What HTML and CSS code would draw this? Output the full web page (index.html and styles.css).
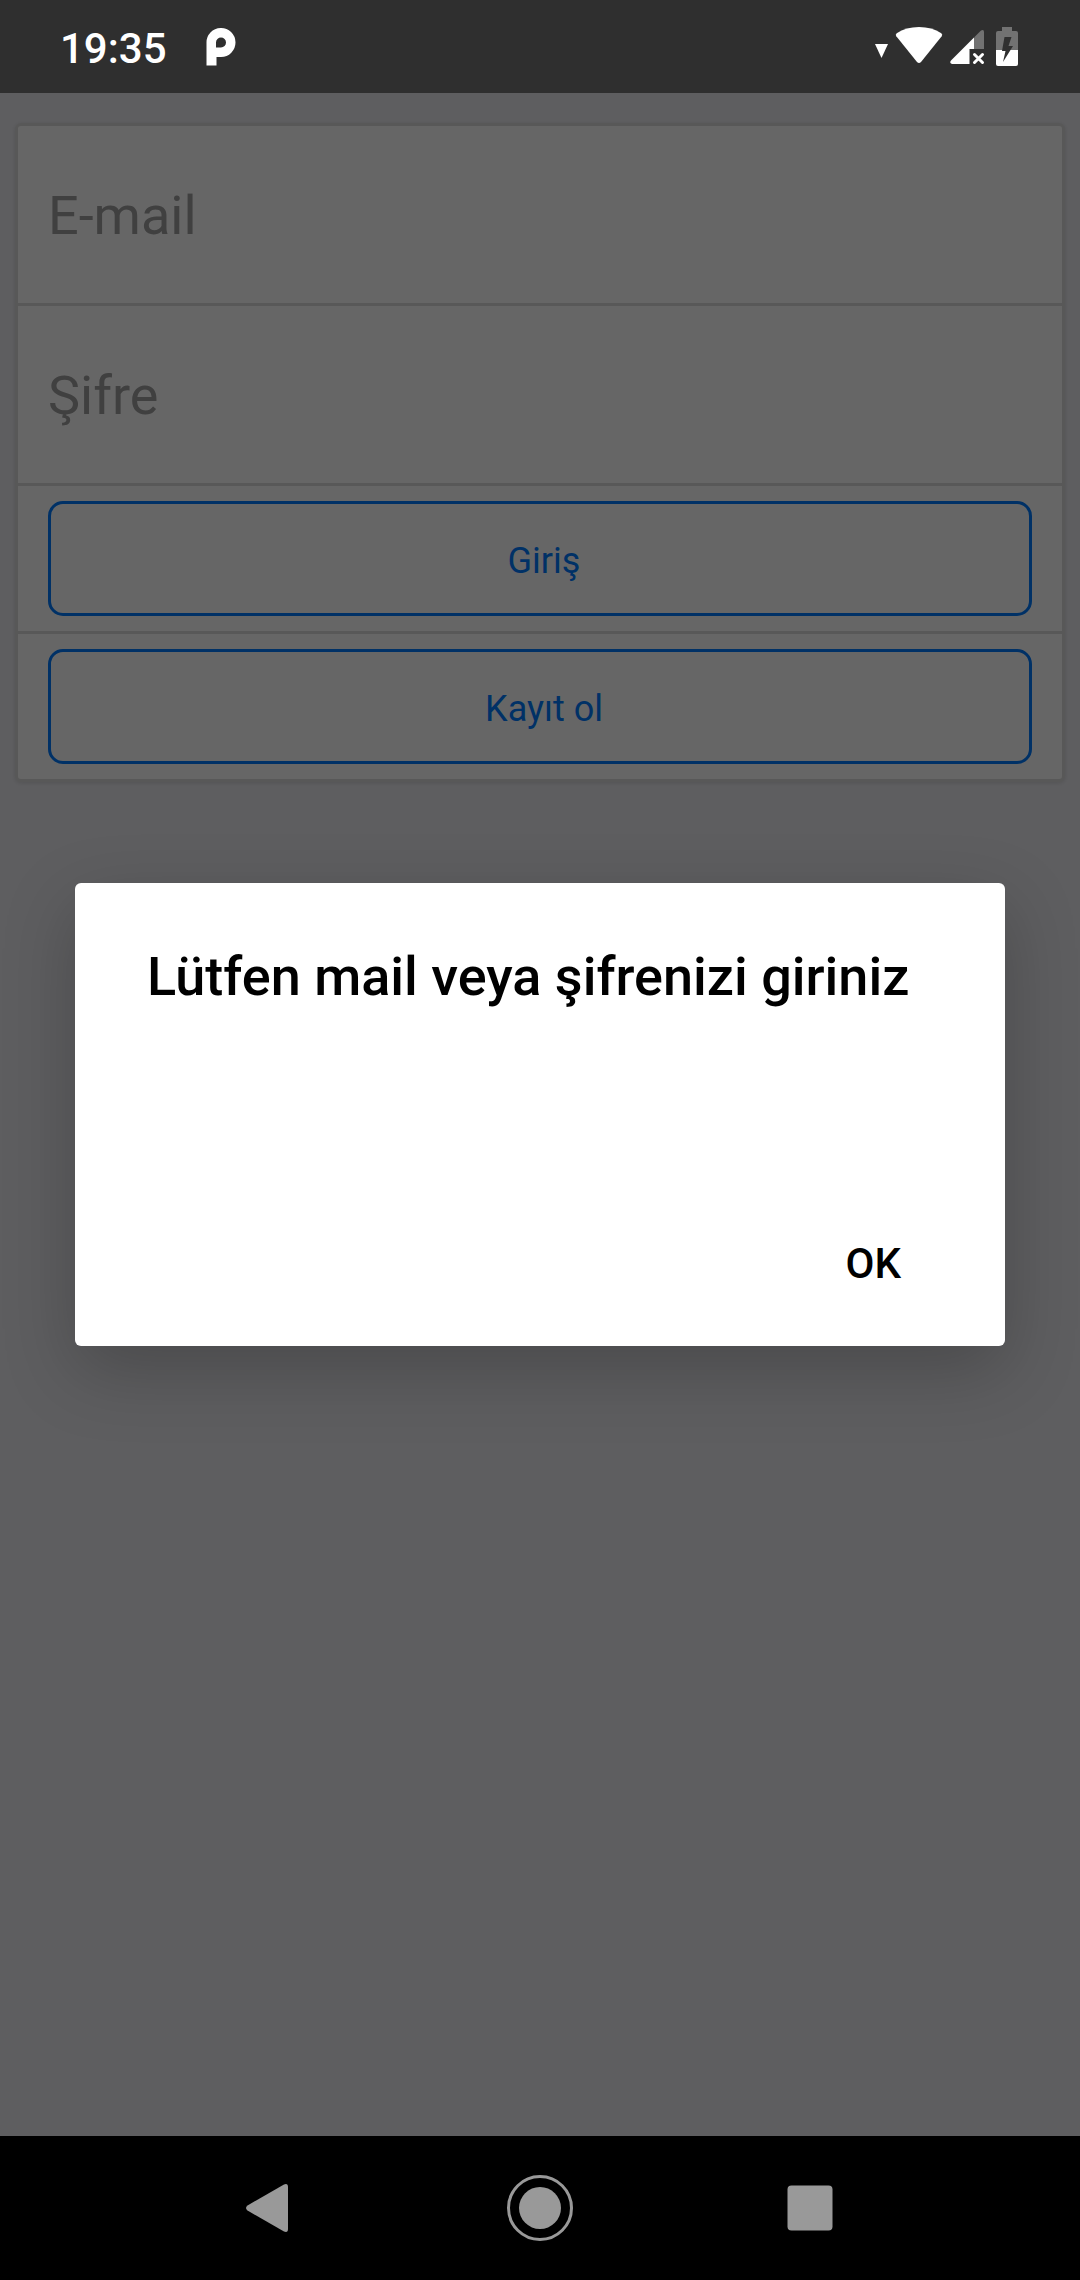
FILE: index.html
```html
<!DOCTYPE html>
<html lang="tr">
<head>
  <meta charset="utf-8">
  <meta name="viewport" content="width=device-width, initial-scale=1">
  <title>Giriş</title>
  <link rel="stylesheet" href="styles.css">
</head>
<body>
  <div class="device">
    <header class="status-bar">
      <div class="status-left">
        <time class="clock">19:35</time>
        <svg class="icon-app" width="30" height="38" viewBox="0 0 30 38" aria-hidden="true">
          <path fill="#fff" fill-rule="evenodd" d="M.5 37.500V15A14.500 14.500 0 1 1 15 29H10.500V37.500ZM15 9.500A5 5 0 0 0 10 14.500V19.500H15A5 5 0 0 0 15 9.500Z"/>
        </svg>
      </div>
      <div class="status-right">
        <svg width="13" height="40" viewBox="0 0 13 40" aria-hidden="true">
          <path fill="#fff" d="M0 18H13L6.500 32Z"/>
        </svg>
        <svg width="48" height="40" viewBox="0 0 48 40" aria-hidden="true">
          <path fill="#fff" d="M1.300 10.200Q0 8.500 1.700 7.200Q11 1 24 1T46.300 7.200Q48 8.500 46.700 10.200L26 36Q24 38 22 36Z"/>
        </svg>
        <svg width="39" height="40" viewBox="0 0 39 40" aria-hidden="true">
          <path fill="#727272" d="M24 11.500L31 4.500Q34 3 34 6V23H24Z"/>
          <path fill="#fff" d="M24 11.500V23H19.500V38H2Q-1 37 1 34.500Z"/>
          <path stroke="#fff" stroke-width="3" stroke-linecap="round" d="M24.500 28.500L32.500 36.500M32.500 28.500L24.500 36.500"/>
        </svg>
        <svg width="22" height="40" viewBox="0 0 22 40" aria-hidden="true">
          <path fill="#727272" d="M6 1H16V5H20Q22 5 22 7V24H0V7Q0 5 2 5H6Z"/>
          <path fill="#fff" d="M0 24H22V38Q22 40 20 40H2Q0 40 0 38Z"/>
          <path fill="#303030" d="M8.500 11H15.500L12.500 20H17L7 36L9.500 25H6Z"/>
        </svg>
      </div>
    </header>

    <main class="screen">
      <form class="card">
        <div class="row">
          <input class="field" type="email" placeholder="E-mail" aria-label="E-mail">
        </div>
        <div class="row">
          <input class="field" type="password" placeholder="Şifre" aria-label="Şifre">
        </div>
        <div class="row row-action"><button class="outline-button" type="button">Giriş</button></div>
        <div class="row row-action"><button class="outline-button" type="button">Kayıt ol</button></div>
      </form>

      <div class="scrim">
        <section class="dialog" role="alertdialog" aria-modal="true" aria-labelledby="dialog-title">
          <h1 class="dialog-title" id="dialog-title">Lütfen mail veya şifrenizi giriniz</h1>
          <div class="dialog-actions"><button class="dialog-button" type="button">OK</button></div>
        </section>
      </div>
    </main>

    <nav class="nav-bar">
      <button class="nav-button" type="button" aria-label="Geri">
        <svg width="72" height="72" viewBox="0 0 72 72"><path fill="#999" d="M50 12.500Q54 11 54 15V57Q54 61 50 59.500L13.500 38.500Q10.500 36 13.500 33.500Z"/></svg>
      </button>
      <button class="nav-button" type="button" aria-label="Ana ekran">
        <svg width="72" height="72" viewBox="0 0 72 72"><circle cx="36" cy="36" r="31.500" fill="none" stroke="#999" stroke-width="3"/><circle cx="36" cy="36" r="21" fill="#999"/></svg>
      </button>
      <button class="nav-button" type="button" aria-label="Son uygulamalar">
        <svg width="72" height="72" viewBox="0 0 72 72"><rect x="13.500" y="13.500" width="45" height="45" rx="4" fill="#999"/></svg>
      </button>
    </nav>
  </div>
</body>
</html>
```

FILE: styles.css
```css
* {
  box-sizing: border-box;
}

body {
  margin: 0;
  font-family: Roboto, "Noto Sans", sans-serif;
  color: #000;
}

button,
input {
  font: inherit;
  margin: 0;
}

svg {
  display: block;
}

.device {
  display: flex;
  flex-direction: column;
  min-height: 100vh;
}

.status-bar {
  display: flex;
  justify-content: space-between;
  align-items: center;
  height: 93px;
  padding: 0 62px 0 60px;
  background: #2f2f2f;
}

.status-left {
  display: flex;
  align-items: center;
  gap: 39px;
}

.clock {
  padding-top: 4px;
  color: #fff;
  font-size: 42px;
  font-weight: 500;
  line-height: 48px;
}

.status-right {
  display: flex;
  align-items: center;
  gap: 7px;
  padding-bottom: 1px;
}

.screen {
  position: relative;
  flex: 1;
  padding: 30px 15px;
  background: #ebebf0;
}

.card {
  border: 3px solid #ddd;
  border-radius: 6px;
  background: #fff;
  box-shadow: 0 1px 4px rgba(0, 0, 0, 0.12);
}

.row {
  padding: 0 30px;
}

.row + .row {
  border-top: 3px solid #ddd;
}

.row-action {
  padding: 15px 30px;
}

.field {
  display: block;
  width: 100%;
  height: 177px;
  padding: 2px 0 0;
  border: 0;
  outline: 0;
  background: none;
  font-size: 54px;
}

.field::placeholder {
  color: #a0a0a0;
  opacity: 1;
}

.outline-button {
  display: block;
  width: 100%;
  height: 115px;
  padding: 5px 0 0 8px;
  border: 3px solid #007aff;
  border-radius: 15px;
  background: none;
  color: #007aff;
  font-size: 36px;
}

.scrim {
  position: absolute;
  inset: 0;
  display: flex;
  align-items: center;
  padding: 0 75px;
  background: rgba(0, 0, 0, 0.6);
}

.dialog {
  display: flex;
  flex-direction: column;
  justify-content: space-between;
  width: 100%;
  min-height: 463px;
  padding: 62px 72px 50px;
  border-radius: 6px;
  background: #fff;
  box-shadow: 0 24px 72px rgba(0, 0, 0, 0.22);
}

.dialog-title {
  margin: 0;
  font-size: 54px;
  font-weight: 500;
  line-height: 64px;
}

.dialog-actions {
  display: flex;
  justify-content: flex-end;
}

.dialog-button {
  padding: 0 32px;
  border: 0;
  background: none;
  color: #000;
  font-size: 42px;
  font-weight: 500;
  line-height: 64px;
}

.nav-bar {
  display: grid;
  grid-template-columns: repeat(3, 1fr);
  height: 144px;
  padding: 0 12.5%;
  background: #000;
}

.nav-button {
  display: grid;
  place-items: center;
  padding: 0;
  border: 0;
  background: none;
}
```
